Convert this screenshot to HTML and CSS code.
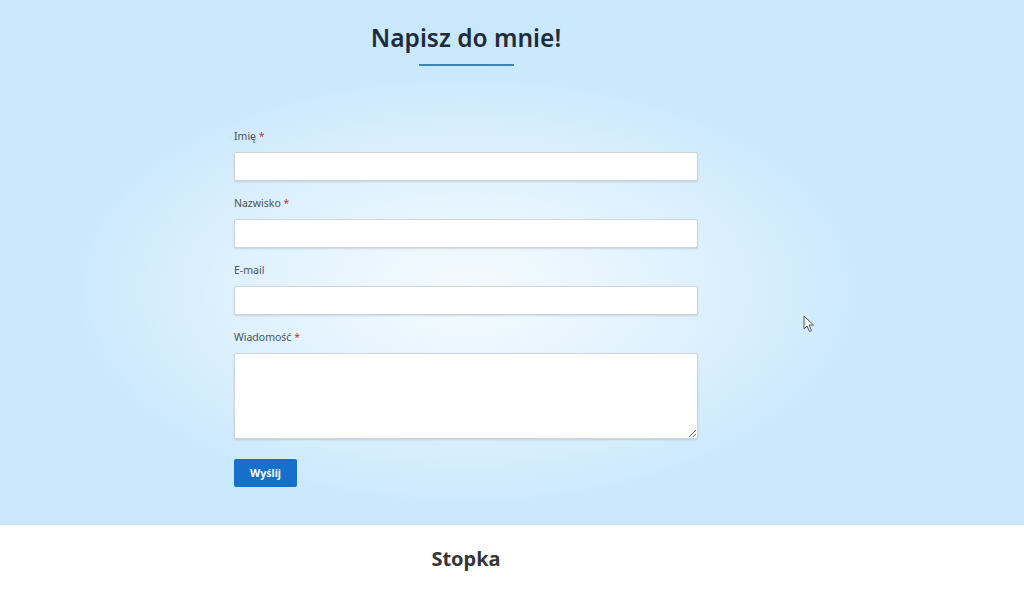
FILE: index.html
```html
<!DOCTYPE html>
<html lang="pl">
<head>
    <meta charset="UTF-8">
    <meta name="viewport" content="width=device-width, initial-scale=1.0">
    <title>Kontakt</title>
    <link rel="stylesheet" href="styles.css">
</head>
<body>
    <section class="contact">
        <div class="inner">
            <h2 class="title">Napisz do mnie!</h2>
            <div class="title-line"></div>
            <form class="form" onsubmit="return false">
                <div class="field">
                    <label for="first-name">Imię <span class="req">*</span></label>
                    <input type="text" id="first-name">
                </div>
                <div class="field">
                    <label for="last-name">Nazwisko <span class="req">*</span></label>
                    <input type="text" id="last-name">
                </div>
                <div class="field">
                    <label for="email">E-mail</label>
                    <input type="email" id="email">
                </div>
                <div class="field">
                    <label for="message">Wiadomość <span class="req">*</span></label>
                    <textarea id="message"></textarea>
                </div>
                <button class="button" type="submit">Wyślij</button>
            </form>
        </div>
        <svg class="cursor" width="12" height="18" viewBox="0 0 12 18">
            <path d="M1 1 L1 14 L4 11 L6.5 16.5 L8.5 15.5 L6 10 L10.5 10 Z" fill="#fff" stroke="#555" stroke-width="1"/>
        </svg>
    </section>
    <footer class="footer">
        <div class="inner">
            <h3 class="footer-title">Stopka</h3>
        </div>
    </footer>
</body>
</html>
```

FILE: styles.css
```css
body {
    margin: 0;
    font-family: "Noto Sans", "Open Sans", Arial, sans-serif;
    background-color: #fff;
}
.contact {
    position: relative;
    height: 525px;
    background: radial-gradient(ellipse 420px 230px at 466px 290px, #f5fbff 0%, #e3f3fe 45%, #c9e8fc 100%);
    overflow: hidden;
}
.inner {
    width: 464px;
    margin-left: 234px;
}
.contact .inner {
    padding-top: 18px;
}
.title {
    margin: 0;
    text-align: center;
    font-size: 24.5px;
    line-height: 40px;
    font-weight: 600;
    color: #1e2b3c;
}
.title-line {
    width: 95px;
    height: 2px;
    margin: 6px auto 0;
    background-color: #3d84b1;
}
.form {
    margin-top: 62px;
}
.field {
    margin-bottom: 14px;
}
.field label {
    display: block;
    font-size: 10.5px;
    line-height: 16px;
    color: #4a5058;
    margin-bottom: 8px;
}
.req {
    color: #d0312d;
}
.field input,
.field textarea {
    display: block;
    box-sizing: border-box;
    width: 100%;
    margin: 0;
    border: 1px solid #cfd3d8;
    border-radius: 2px;
    background-color: #fff;
    box-shadow: 0 1px 2px rgba(0, 0, 0, 0.12);
    font-family: inherit;
}
.field input {
    height: 29px;
}
.field textarea {
    height: 86px;
    resize: vertical;
}
.button {
    display: block;
    width: 63px;
    height: 28px;
    margin-top: 20px;
    padding: 0;
    border: none;
    border-radius: 2px;
    background-color: #176fcc;
    color: #fff;
    font-family: inherit;
    font-size: 10.5px;
    font-weight: 700;
    cursor: pointer;
}
.button:hover {
    background-color: #115ba8;
}
.cursor {
    position: absolute;
    left: 803px;
    top: 315px;
}
.footer {
    height: 68px;
    background-color: #fff;
}
.footer-title {
    margin: 0;
    text-align: center;
    font-size: 20px;
    line-height: 68px;
    font-weight: 700;
    color: #33363a;
}
```
